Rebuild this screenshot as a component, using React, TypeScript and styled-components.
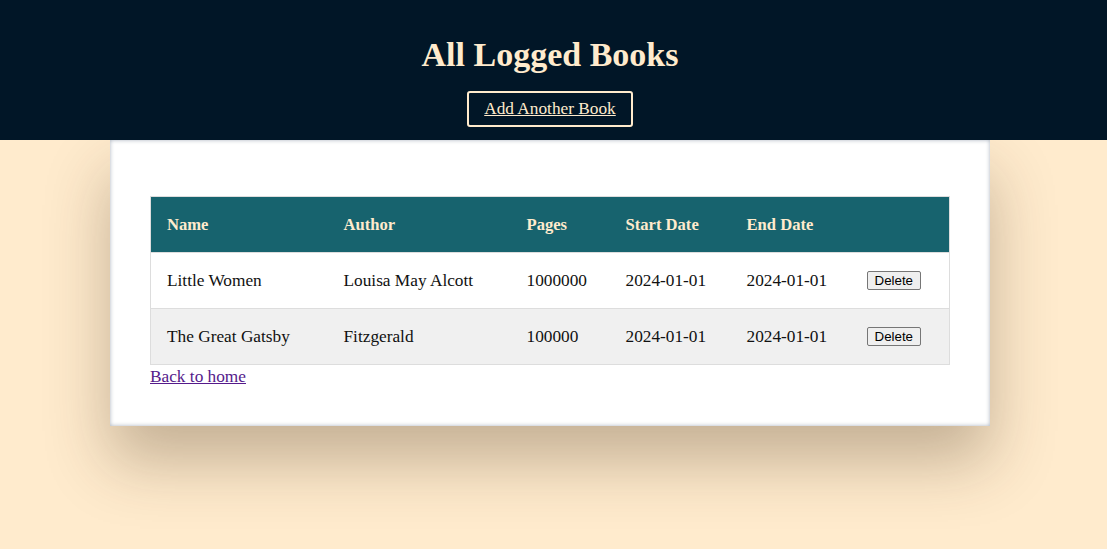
import styled, { createGlobalStyle } from 'styled-components';

const GlobalStyle = createGlobalStyle`
  html, body { margin: 0; padding: 0; }
  body {
    background: #ffebcd;
    font-family: 'Palatino Linotype', 'Book Antiqua', Palatino, 'Liberation Serif', serif;
    min-height: 549px;
  }
`;

const Header = styled.header`
  background: #011627;
  height: 140px;
  box-sizing: border-box;
  display: flex;
  flex-direction: column;
  align-items: center;
  padding: 36px 7px 0 0;
  gap: 17px;
  color: #ffebcd;
  position: relative;
  z-index: 1;
`;

const Title = styled.h1`
  margin: 0;
  font-size: 34px;
  line-height: 38px;
  font-weight: 700;
`;

const HeaderLink = styled.a`
  display: flex;
  align-items: center;
  height: 36px;
  box-sizing: border-box;
  padding: 0 15px;
  border: 2px solid #ffebcd;
  border-radius: 3px;
  color: #ffebcd;
  font-size: 17.3px;
  text-decoration: underline;
`;

const Main = styled.div`
  width: 1100px;
  display: flex;
  justify-content: center;
`;

const Card = styled.main`
  width: 880px;
  box-sizing: border-box;
  background: #fff;
  padding: 56px 40px 37px;
  box-shadow: inset 0 0 4px rgba(40, 60, 90, 0.4), 0 35px 60px rgba(60, 40, 20, 0.3);
`;

const Table = styled.table`
  width: 100%;
  border-collapse: collapse;
  table-layout: fixed;
  border: 1px solid #ddd;
  font-size: 17.3px;
`;

const Th = styled.th<{ $w?: number }>`
  width: ${p => (p.$w ? `${p.$w}px` : 'auto')};
  background: #17636e;
  color: #ffebcd;
  text-align: left;
  font-weight: 700;
  font-size: 16.6px;
  padding: 16px;
  height: 56px;
  box-sizing: border-box;
`;

const Row = styled.tr<{ $alt?: boolean }>`
  background: ${p => (p.$alt ? '#f0f0f0' : '#fff')};
  border-top: 1px solid #ddd;
`;

const Td = styled.td`
  padding: 0 16px;
  height: 56px;
  box-sizing: border-box;
  color: #111;
`;

const DeleteButton = styled.button`
  font-family: Arial, 'Liberation Sans', sans-serif;
  font-size: 13.33px;
  padding: 1px 7px;
  margin-top: -2px;
  vertical-align: middle;
  background: #efefef;
  border: 1px solid #767676;
  border-radius: 2px;
  color: #000;
`;

const BackLink = styled.a`
  display: block;
  color: #551a8b;
  font-size: 17.3px;
  line-height: 24px;
  text-decoration: underline;
`;

const books = [
  { name: 'Little Women', author: 'Louisa May Alcott', pages: 1000000, start: '2024-01-01', end: '2024-01-01' },
  { name: 'The Great Gatsby', author: 'Fitzgerald', pages: 100000, start: '2024-01-01', end: '2024-01-01' },
];

export default function App() {
  return (
    <>
      <GlobalStyle />
      <Header>
        <Title>All Logged Books</Title>
        <HeaderLink href="#">Add Another Book</HeaderLink>
      </Header>
      <Main>
        <Card>
          <Table>
            <thead>
              <tr>
                <Th $w={177}>Name</Th>
                <Th $w={183}>Author</Th>
                <Th $w={99}>Pages</Th>
                <Th $w={121}>Start Date</Th>
                <Th $w={120}>End Date</Th>
                <Th></Th>
              </tr>
            </thead>
            <tbody>
              {books.map((b, i) => (
                <Row key={b.name} $alt={i % 2 === 1}>
                  <Td>{b.name}</Td>
                  <Td>{b.author}</Td>
                  <Td>{b.pages}</Td>
                  <Td>{b.start}</Td>
                  <Td>{b.end}</Td>
                  <Td>
                    <DeleteButton>Delete</DeleteButton>
                  </Td>
                </Row>
              ))}
            </tbody>
          </Table>
          <BackLink href="#">Back to home</BackLink>
        </Card>
      </Main>
    </>
  );
}
